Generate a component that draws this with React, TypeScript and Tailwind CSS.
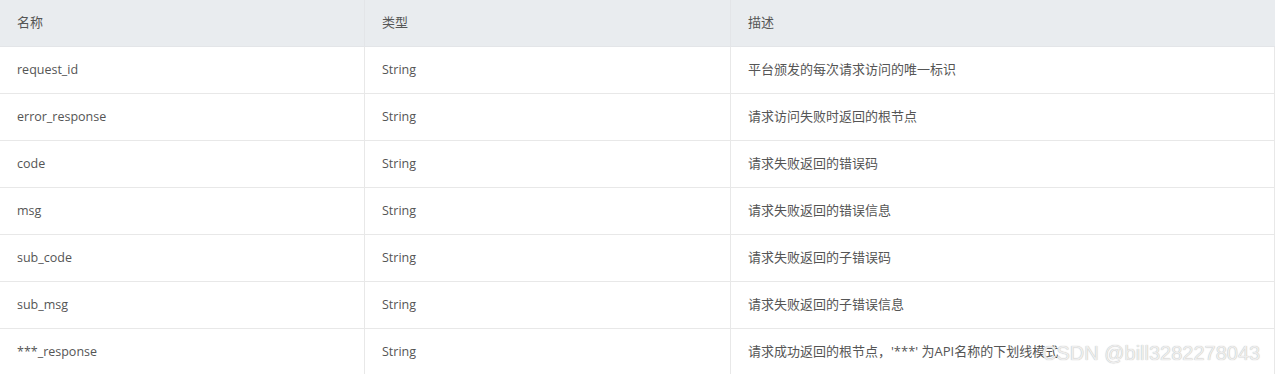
const rows = [
  { name: "request_id", type: "String", desc: "平台颁发的每次请求访问的唯一标识" },
  { name: "error_response", type: "String", desc: "请求访问失败时返回的根节点" },
  { name: "code", type: "String", desc: "请求失败返回的错误码" },
  { name: "msg", type: "String", desc: "请求失败返回的错误信息" },
  { name: "sub_code", type: "String", desc: "请求失败返回的子错误码" },
  { name: "sub_msg", type: "String", desc: "请求失败返回的子错误信息" },
  { name: "***_response", type: "String", desc: "请求成功返回的根节点，'***' 为API名称的下划线模式" },
];

const font = { fontFamily: '"Open Sans", "Noto Sans CJK SC", sans-serif' };

export default function App() {
  return (
    <div className="relative w-[1275px] h-[374px] overflow-hidden bg-white">
      <div className="text-[12.5px] text-[#555]" style={font}>
        {/* Header */}
        <div className="grid grid-cols-[365px_366px_1fr] h-[47px] bg-[#e9ecef] border-b border-[#e3e5e8] text-[13px]">
          <div className="flex items-center pl-[17px] border-r border-[#e3e5e8]">名称</div>
          <div className="flex items-center pl-[17px] border-r border-[#e3e5e8]">类型</div>
          <div className="flex items-center pl-[17px]">描述</div>
        </div>

        {/* Rows */}
        {rows.map((r) => (
          <div
            key={r.name}
            className="grid grid-cols-[365px_366px_1fr] h-[47px] border-b border-[#e8e8e8]"
          >
            <div className="flex items-center pl-[17px] border-r border-[#e8e8e8]">{r.name}</div>
            <div className="flex items-center pl-[17px] border-r border-[#e8e8e8]">{r.type}</div>
            <div className="flex items-center pl-[17px] border-r border-[#e8e8e8] text-[13px]">
              {r.desc}
            </div>
          </div>
        ))}
      </div>

      {/* Watermark */}
      <div
        className="absolute left-[1042px] top-[343px] text-[20px] leading-none text-[#eeeeee] whitespace-nowrap"
        style={{
          fontFamily: '"Liberation Sans", Arial, sans-serif',
          textShadow: "0 0 1px #aaa",
        }}
      >
        CSDN @bill3282278043
      </div>
    </div>
  );
}
